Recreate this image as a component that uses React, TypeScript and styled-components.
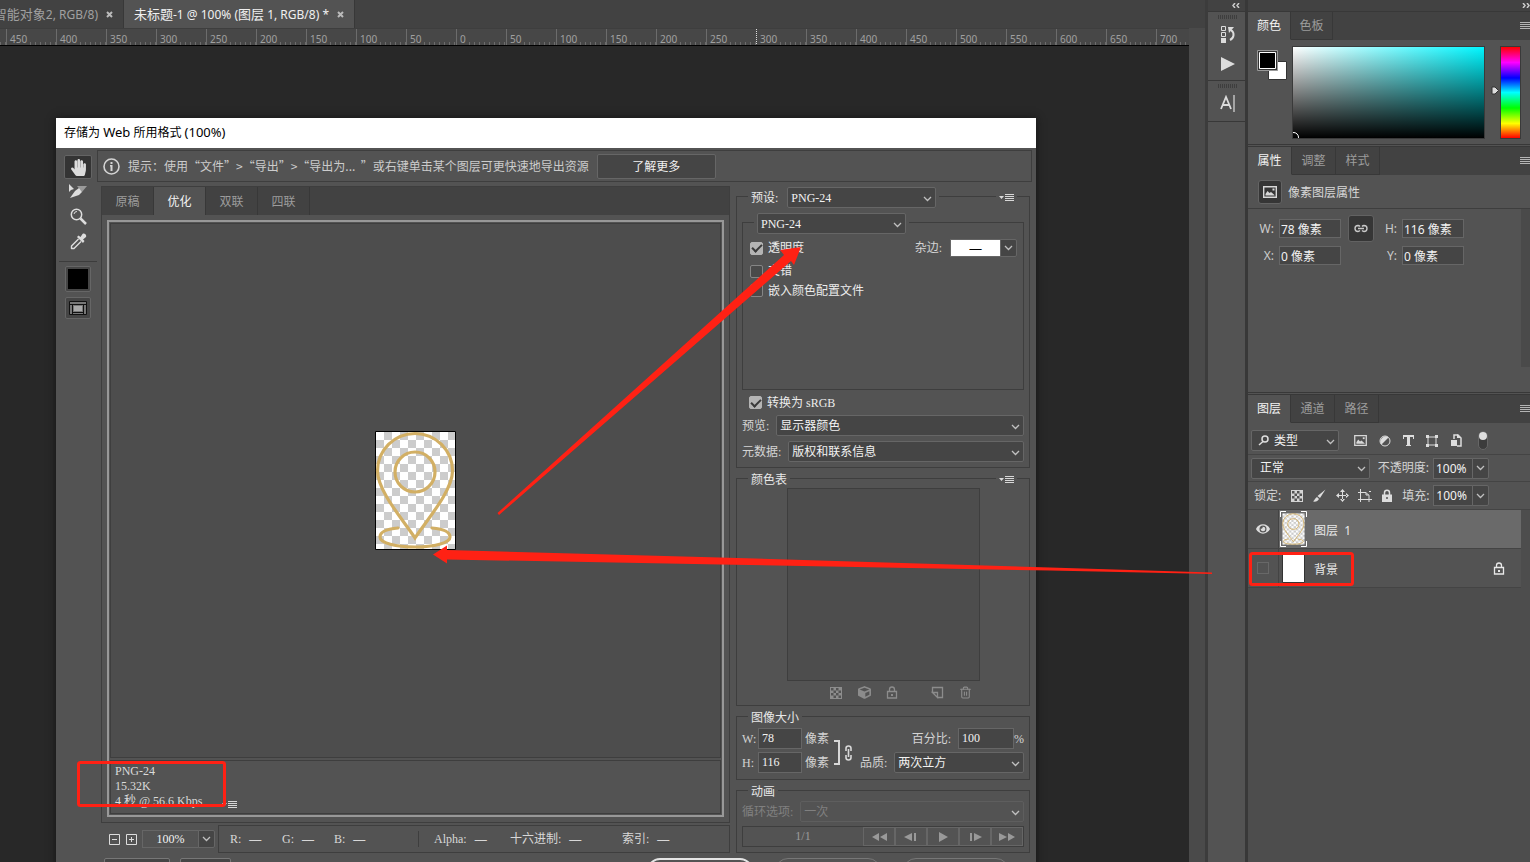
import React from 'react';
import styled, { createGlobalStyle, css } from 'styled-components';
import { FaHandPaper, FaEye, FaCube } from 'react-icons/fa';
import { Trash2 } from 'lucide-react';

const c = {
  bar: '#424242',
  panel: '#535353',
  line: '#3e3e3e',
  field: '#454545',
  fieldBorder: '#666666',
  text: '#e8e8e8',
  soft: '#cccccc',
  muted: '#9c9c9c',
  off: '#808080',
  red: '#ff2114',
};

const Global = createGlobalStyle`
  * { box-sizing: border-box; }
  body {
    margin: 0;
    background: #282828;
    color: ${c.text};
    font: 12px/16px "Noto Sans", "Noto Sans CJK SC", sans-serif;
    overflow: hidden;
  }
  button, input, select { font: inherit; color: inherit; margin: 0; }
  svg { display: block; }
`;

const Page = styled.div`
  position: relative;
  display: flex;
  height: 100vh;
  overflow: hidden;
`;

/* one step larger than the 12px text around it */
const Larger = styled.span`
  font-size: 13px;
`;

/* ---------- document window ---------- */
const DocumentArea = styled.main`
  flex: 1;
  min-width: 0;
  display: flex;
  flex-direction: column;
  background: #4a4a4a;
`;
const DocTabs = styled.nav`
  display: flex;
  height: 28px;
  flex: none;
  background: ${c.bar};
`;
const DocTab = styled.div<{ $active?: boolean }>`
  display: flex;
  align-items: center;
  justify-content: flex-end;
  gap: 8px;
  width: ${p => (p.$active ? 231 : 124)}px;
  padding: 1px 10px 0 0;
  overflow: hidden;
  white-space: nowrap;
  border-right: 1px solid #383838;
  color: ${p => (p.$active ? '#f0f0f0' : '#a0a0a0')};
  background: ${p => (p.$active ? c.panel : c.bar)};
`;
const CloseButton = styled.button`
  border: 0;
  padding: 0;
  background: none;
`;
const Ruler = styled.div`
  display: flex;
  height: 18px;
  flex: none;
  margin-right: 16px;
  overflow: hidden;
  background: #474747;
  border-top: 1px solid #3e3e3e;
  border-bottom: 1px solid #000;
`;
const RulerCell = styled.div<{ $cursor?: boolean }>`
  display: flex;
  flex: none;
  align-items: flex-end;
  gap: 3px;
  width: 50px;
  height: 17px;
  padding-left: 3px;
  border-left: 1px ${p => (p.$cursor ? 'dotted #ddd' : 'solid #6c6c6c')};
  color: #a0a0a0;
  font-size: 10px;
  line-height: 14px;
  &:first-child { width: 6px; padding: 0; border: 0; }
  &::after {
    content: '';
    flex: 1;
    height: 4px;
    background: repeating-linear-gradient(90deg, #6c6c6c 0 1px, transparent 1px 5px);
  }
`;
const Canvas = styled.div`
  flex: 1;
  min-height: 0;
  margin-right: 16px;
  padding: 72px 153px 0 56px;
  background: #282828;
  overflow: hidden;
`;

/* ---------- save dialog ---------- */
const Dialog = styled.section`
  background: ${c.panel};
  box-shadow: 0 0 8px #151515;
  font-family: "Liberation Serif", "Noto Sans CJK SC", serif;
`;
const TitleBar = styled.h1`
  margin: 0;
  height: 30px;
  padding: 0 8px;
  background: #fff;
  color: #000;
  font: 12px/29px "Noto Sans", "Noto Sans CJK SC", sans-serif;
`;
const DialogBody = styled.div`
  display: flex;
`;
const Toolbox = styled.div`
  display: flex;
  flex-direction: column;
  align-items: center;
  width: 41px;
  padding: 7px 0 0 3px;
`;
const ToolButton = styled.button<{ $active?: boolean }>`
  display: grid;
  place-items: center;
  width: 28px;
  height: ${p => (p.$active ? 24 : 25)}px;
  padding: 0;
  color: #dcdcdc;
  border-radius: 2px;
  border: 1px solid ${p => (p.$active ? '#646464' : 'transparent')};
  background: ${p => (p.$active ? '#343434' : 'none')};
`;
const ToolDivider = styled.hr`
  align-self: stretch;
  margin: 7px 0 4px;
  border: 0;
  border-top: 1px solid #3c3c3c;
`;
const SwatchButton = styled.button<{ $short?: boolean }>`
  display: grid;
  place-items: center;
  width: 26px;
  height: ${p => (p.$short ? 22 : 26)}px;
  margin-bottom: 5px;
  padding: 0;
  border: 1px solid #666;
  border-radius: 2px;
  background: ${c.field};
`;
const DialogMain = styled.div`
  flex: 1;
  min-width: 0;
  padding-top: 2px;
`;
const HintBar = styled.div`
  display: flex;
  align-items: center;
  gap: 8px;
  height: 32px;
  margin-right: 4px;
  padding-left: 5px;
  border: 1px solid ${c.line};
  color: ${c.soft};
  font-family: "Noto Sans CJK SC", sans-serif;
  white-space: nowrap;
`;
const LearnMore = styled.button`
  width: 119px;
  height: 25px;
  padding: 0;
  border: 1px solid #666;
  border-radius: 2px;
  background: ${c.field};
  color: #f0f0f0;
`;
const Columns = styled.div`
  display: flex;
  gap: 6px;
  margin: 4px 6px 0 4px;
`;
const PreviewColumn = styled.div`
  flex: 1;
  min-width: 0;
  display: flex;
  flex-direction: column;
`;
const PreviewPane = styled.div`
  flex: 1;
  display: flex;
  flex-direction: column;
  border: 1px solid ${c.line};
`;
const ViewTabs = styled.div`
  display: flex;
  height: 28px;
  background: ${c.bar};
`;
const ViewTab = styled.button<{ $active?: boolean }>`
  width: 52px;
  padding: 1px 0 0;
  border: 0;
  border-right: 1px solid #383838;
  background: ${p => (p.$active ? c.panel : c.bar)};
  color: ${p => (p.$active ? '#f4f4f4' : c.muted)};
`;
const PreviewFrame = styled.div`
  flex: 1;
  display: flex;
  flex-direction: column;
  gap: 2px;
  margin: 5px;
  padding: 1px;
  border: 2px solid #989898;
`;
const Artboard = styled.div`
  flex: 1;
  display: grid;
  place-items: center;
  border: 1px solid ${c.line};
  background: #4d4d4d;
`;
const InfoPane = styled.div`
  display: flex;
  align-items: flex-end;
  gap: 20px;
  height: 54px;
  padding: 3px 4px 4px;
  border: 1px solid ${c.line};
  color: #dadada;
  line-height: 15px;
`;
const StatusRow = styled.div`
  display: flex;
  align-items: center;
  height: 28px;
  margin-top: 2px;
  padding-left: 8px;
`;
const IconButton = styled.button<{ $gap?: number }>`
  display: grid;
  place-items: center;
  flex: none;
  border: 0;
  padding: 0;
  margin-right: ${p => p.$gap ?? 0}px;
  background: none;
  color: inherit;
`;
const Readouts = styled.div`
  flex: 1;
  display: flex;
  align-items: center;
  height: 28px;
  margin-left: 3px;
  padding-left: 11px;
  border: 1px solid ${c.line};
  color: #d8d8d8;
  white-space: nowrap;
`;
const Readout = styled.span<{ $w: number; $rule?: boolean }>`
  display: flex;
  gap: 8px;
  width: ${p => p.$w}px;
  ${p => p.$rule && css`border-right: 1px solid ${c.line}; margin-right: 15px;`}
`;

/* ---------- fields ---------- */
const SelectBox = styled.span<{ $w?: number; $off?: boolean }>`
  position: relative;
  display: flex;
  flex: ${p => (p.$w ? 'none' : 1)};
  width: ${p => (p.$w ? p.$w + 'px' : 'auto')};
  height: 21px;
  color: ${p => (p.$off ? c.off : '#f2f2f2')};
  select {
    appearance: none;
    flex: 1;
    min-width: 0;
    padding: 0 18px 0 3px;
    border: 1px solid ${p => (p.$off ? '#5e5e5e' : c.fieldBorder)};
    border-radius: 2px;
    background: ${p => (p.$off ? c.panel : c.field)};
  }
  svg {
    position: absolute;
    right: 4px;
    top: calc(50% - 2px);
    pointer-events: none;
  }
`;
const TextInput = styled.input<{ $w: number; $h?: number }>`
  width: ${p => p.$w}px;
  height: ${p => p.$h ?? 21}px;
  padding: 0 3px;
  border: 1px solid ${c.fieldBorder};
  background: ${c.field};
  color: #f2f2f2;
`;
const ZoomInput = styled(TextInput)`
  text-align: center;
  background: ${c.panel};
`;
const Drop = styled.button<{ $h?: number }>`
  display: grid;
  place-items: center;
  width: 17px;
  height: ${p => p.$h ?? 21}px;
  margin-left: -1px;
  padding: 0;
  border: 1px solid ${c.fieldBorder};
  border-radius: 0 2px 2px 0;
  background: ${c.field};
`;
const Group = styled.section<{ $inner?: boolean }>`
  margin-top: ${p => (p.$inner ? 14 : 10)}px;
  min-height: ${p => (p.$inner ? 168 : 0)}px;
  padding: 0 5px 5px;
  border: 1px solid ${c.line};
`;
const GroupHead = styled.div<{ $tall?: boolean }>`
  display: flex;
  align-items: center;
  justify-content: space-between;
  height: ${p => (p.$tall ? 21 : 17)}px;
  margin-top: ${p => (p.$tall ? -10 : -8)}px;
  padding: 0 7px 0 6px;
`;
const HeadPart = styled.div`
  display: flex;
  align-items: center;
  gap: 9px;
  padding: 0 3px;
  background: ${c.panel};
`;
const Settings = styled.aside`
  width: 294px;
  flex: none;
`;
const Row = styled.div<{ $h?: number; $top?: number }>`
  display: flex;
  align-items: center;
  justify-content: space-between;
  height: ${p => p.$h ?? 21}px;
  margin-top: ${p => p.$top ?? 0}px;
  color: #d4d4d4;
  white-space: nowrap;
  > label { flex: none; margin-right: 7px; }
`;
const Check = styled.label<{ $inner?: boolean }>`
  display: flex;
  align-items: center;
  gap: 5px;
  padding-left: ${p => (p.$inner ? 2 : 7)}px;
  color: #ececec;
  input {
    appearance: none;
    display: grid;
    place-items: center;
    width: 13px;
    height: 13px;
    border: 1px solid #858585;
    border-radius: 2px;
    background: #4a4a4a;
  }
  input:checked { background: #b4b4b4; border-color: #b4b4b4; }
  input:checked::after {
    content: '';
    width: 8px;
    height: 4px;
    margin-top: -2px;
    border-left: 2px solid #3a3a3a;
    border-bottom: 2px solid #3a3a3a;
    transform: rotate(-45deg);
  }
`;
const Matte = styled.div`
  display: flex;
  align-items: center;
  margin-right: 1px;
  > span { margin-right: 8px; }
`;
const MatteColor = styled.button`
  width: 51px;
  height: 18px;
  padding: 0;
  border: 1px solid ${c.fieldBorder};
  background: #fff;
  color: #000;
  font-weight: bold;
  line-height: 12px;
`;
const ColorTable = styled.div`
  width: 193px;
  height: 193px;
  margin: 0 auto;
  border: 1px solid ${c.line};
  background: #4d4d4d;
`;
const TableTools = styled.div`
  display: flex;
  align-items: center;
  height: 19px;
  padding: 4px 0 0 88px;
  color: #8c8c8c;
`;
const SizeLayout = styled.div`
  display: flex;
  padding: 2px 0 1px;
`;
const SizeColumn = styled.div<{ $grow?: boolean }>`
  display: flex;
  flex-direction: column;
  gap: 3px;
  flex: ${p => (p.$grow ? 1 : 'none')};
`;
const SizeRow = styled(Row)<{ $end?: boolean }>`
  justify-content: ${p => (p.$end ? 'flex-end' : 'flex-start')};
`;
const UnitLabel = styled.span`
  display: flex;
  align-items: center;
  label { width: 16px; }
`;
const LinkBracket = styled.svg`
  flex: none;
  margin: 12px 6px 0 5px;
`;
const DimLabel = styled.label`
  color: ${c.off};
`;
const Player = styled.div`
  display: flex;
  align-items: stretch;
  height: 21px;
  margin-top: 4px;
  border: 1px solid ${c.line};
  color: ${c.muted};
  line-height: 18px;
  > span { flex: 1; text-align: center; }
`;
const PlayerButton = styled.button`
  display: grid;
  place-items: center;
  width: 32px;
  padding: 0;
  border: 1px solid #666;
  background: ${c.panel};
  color: #999;
`;
const Footer = styled.div`
  display: flex;
  align-items: flex-start;
  height: 30px;
  margin: 5px 27px 0 7px;
`;
const FooterButton = styled.button<{ $w: number; $round?: boolean; $main?: boolean }>`
  width: ${p => p.$w}px;
  height: 26px;
  margin-left: ${p => (p.$round ? 22 : 0)}px;
  margin-right: ${p => (p.$round ? 0 : 10)}px;
  border: ${p => (p.$main ? '2px solid #e4e4e4' : '1px solid #777')};
  border-radius: ${p => (p.$round ? 13 : 2)}px;
  background: ${p => (p.$round ? c.panel : c.field)};
`;
const Spacer = styled.span`
  flex: 1;
`;

/* ---------- right side ---------- */
const Dock = styled.aside`
  display: flex;
  flex-direction: column;
  width: 42px;
  flex: none;
  border-left: 3px solid #3c3c3c;
  border-right: 2px solid #383838;
  background: ${c.panel};
`;
const DockTop = styled.div<{ $edge?: boolean }>`
  display: flex;
  justify-content: flex-end;
  align-items: center;
  height: 12px;
  flex: none;
  padding-right: ${p => (p.$edge ? 0 : 5)}px;
  border-bottom: 1px solid #383838;
  background: ${c.bar};
  color: #ccc;
`;
const DockGroup = styled.div<{ $h: number }>`
  display: flex;
  flex-direction: column;
  align-items: center;
  height: ${p => p.$h}px;
  padding: 3px 0 0 2px;
  border-bottom: 1px solid #383838;
  color: #dcdcdc;
  &::before {
    content: '';
    width: 19px;
    height: 4px;
    background: repeating-linear-gradient(90deg, #3e3e3e 0 1px, transparent 1px 2px);
  }
`;
const DockButton = styled(IconButton)`
  margin: 0;
  width: 30px;
  height: 30px;
`;
const Panels = styled.aside`
  display: flex;
  flex-direction: column;
  width: 283px;
  flex: none;
  border-left: 1px solid #383838;
  background: ${c.panel};
`;
const Panel = styled.section<{ $h?: number }>`
  flex: ${p => (p.$h ? 'none' : 1)};
  height: ${p => (p.$h ? p.$h + 'px' : 'auto')};
  display: flex;
  flex-direction: column;
  border-bottom: ${p => (p.$h ? '3px double #383838' : 0)};
`;
const PanelTabs = styled.div`
  display: flex;
  align-items: stretch;
  height: 28px;
  flex: none;
  background: ${c.bar};
`;
const PanelTab = styled.button<{ $active?: boolean; $w?: number }>`
  width: ${p => p.$w ?? 44}px;
  padding: 0;
  border: 0;
  border-right: 1px solid #383838;
  border-bottom: 1px solid ${p => (p.$active ? c.panel : '#383838')};
  background: ${p => (p.$active ? c.panel : c.bar)};
  color: ${p => (p.$active ? '#f4f4f4' : c.muted)};
`;
const PanelMenu = styled(IconButton)`
  margin-left: auto;
  width: 10px;
  color: #b4b4b4;
`;
const ColorBody = styled.div`
  display: flex;
  padding: 6px 9px 0;
`;
const ColorPair = styled.svg`
  flex: none;
  margin: 4px 4px 0 0;
`;
const ColorField = styled.div`
  flex: 1;
  height: 93px;
  border: 1px solid #3a3a3a;
  background:
    linear-gradient(to bottom, transparent, #000),
    linear-gradient(to right, #fff, #00f6ff);
  overflow: hidden;
  display: flex;
  align-items: flex-end;
`;
const HueHandle = styled.svg`
  flex: none;
  margin: 40px 1px 0 6px;
`;
const HueStrip = styled.div`
  width: 21px;
  height: 93px;
  border: 1px solid #3a3a3a;
  background: linear-gradient(to bottom, #f00, #f0f 17%, #00f 34%, #0ff 50%, #0f0 67%, #ff0 84%, #f00);
`;
const PropTitle = styled.div`
  display: flex;
  align-items: center;
  gap: 6px;
  height: 34px;
  flex: none;
  padding-left: 10px;
  border-bottom: 1px solid ${c.line};
  color: #d8d8d8;
  line-height: 20px;
  > span:last-child { padding-top: 2px; }
`;
const PropIcon = styled.span`
  display: grid;
  place-items: center;
  width: 24px;
  height: 24px;
  border: 1px solid #646464;
  border-radius: 3px;
  background: #363636;
`;
const PropBody = styled.div`
  flex: 1;
  display: flex;
  padding-left: 8px;
  > span { width: 9px; height: 158px; margin-left: auto; background: #4a4a4a; }
`;
const PropGrid = styled.div`
  display: grid;
  grid-template-columns: 23px 69px 26px 28px 62px;
  grid-auto-rows: 27px;
  align-items: center;
  padding-top: 6px;
  color: ${c.soft};
  label { text-align: right; padding-right: 5px; }
  input { padding: 0 1px; }
`;
const LinkButton = styled.button`
  display: grid;
  place-items: center;
  width: 26px;
  height: 27px;
  padding: 0;
  border: 1px solid #626262;
  border-radius: 3px;
  background: #363636;
`;
const LayerBar = styled.div<{ $h: number; $top?: number }>`
  display: flex;
  align-items: center;
  height: ${p => p.$h}px;
  flex: none;
  padding: ${p => p.$top ?? 0}px 0 0 3px;
  border-bottom: 1px solid #444;
  color: #d4d4d4;
  white-space: nowrap;
`;
const TypeSelect = styled(SelectBox)`
  select { padding-left: 22px; }
  svg:first-child { left: 7px; right: auto; top: 5px; z-index: 1; }
`;
const BlendSelect = styled(SelectBox)`
  select { padding-left: 8px; }
`;
const FilterIcons = styled.div<{ $left: number }>`
  display: flex;
  align-items: center;
  gap: 8px;
  padding-left: ${p => p.$left}px;
`;
const BarLabel = styled.label<{ $w: number }>`
  width: ${p => p.$w}px;
  text-align: right;
  padding-right: 4px;
`;
const LevelInput = styled(TextInput)`
  padding: 0 1px 0 2px;
`;
const LayerList = styled.div`
  flex: 1;
  padding-right: 9px;
  background: #4d4d4d;
`;
const Layer = styled.div<{ $active?: boolean }>`
  display: flex;
  align-items: stretch;
  height: 39px;
  border-bottom: 1px solid #444;
  background: ${p => (p.$active ? '#6a6a6a' : c.panel)};
  > span { flex: 1; align-self: center; padding: 3px 0 0 7px; }
  > svg { align-self: center; flex: none; margin-left: 1px; }
`;
const EyeCell = styled.button`
  display: grid;
  place-items: center;
  width: 31px;
  padding: 0;
  border: 0;
  border-right: 1px solid #444;
  background: ${c.panel};
  color: #dcdcdc;
`;
const HiddenEye = styled.i`
  width: 12px;
  height: 12px;
  border: 1px solid #686868;
`;
const LayerLock = styled.div`
  display: grid;
  place-items: center;
  width: 44px;
`;
const Markup = styled.svg`
  position: absolute;
  left: 0;
  top: 0;
  pointer-events: none;
`;

/* ---------- icons ---------- */
const Chevron = () => (
  <svg width="9" height="6" viewBox="0 0 9 6" fill="none" stroke="#c0c0c0" strokeWidth="1.3"><path d="M1 1l3.500 3.500L8 1" /></svg>
);
const MenuGlyph = () => (
  <svg width="15" height="9" viewBox="0 0 15 9" fill="#d8d8d8"><path d="M0 3h5l-2.500 3zM6 1h9v1H6zM6 3h9v1H6zM6 5h9v1H6zM6 7h9v1H6z" /></svg>
);
const Burger = () => (
  <svg width="10" height="8" viewBox="0 0 10 8" fill="currentColor"><path d="M0 0h10v1H0zM0 2h10v1H0zM0 4h10v1H0zM0 6h10v1H0z" /></svg>
);
const Cross = () => (
  <svg width="7" height="7" viewBox="0 0 7 7" stroke="#bbb" strokeWidth="2"><path d="M1 1l5 5M6 1L1 6" /></svg>
);
const DoubleArrow = ({ right }: { right?: boolean }) => (
  <svg width="8" height="5" viewBox="0 0 8 5" fill="none" stroke="#ccc" strokeWidth="1.500">
    <path d={right ? 'M1 0l2 2.500L1 5M5 0l2 2.500L5 5' : 'M3 0L1 2.500L3 5M7 0L5 2.500L7 5'} />
  </svg>
);
const Checker = () => (
  <svg width="12" height="12" viewBox="0 0 12 12" fill="currentColor"><path d="M0 0h12v12H0zM1 1v2.500h2.500V1zM6 1v2.500h2.500V1zM3.500 3.500V6H6V3.500zM8.500 3.500V6H11V3.500zM1 6v2.500h2.500V6zM6 6v2.500h2.500V6zM3.500 8.500V11H6V8.500zM8.500 8.500V11H11V8.500z" fillRule="evenodd" /></svg>
);
const LockSolid = () => (
  <svg width="12" height="13" viewBox="0 0 12 13"><path d="M3.500 6V3.800a2.500 2.500 0 0 1 5 0V6" fill="none" stroke="#dcdcdc" strokeWidth="1.500" /><path d="M1 5.500h10V13H1z" fill="#dcdcdc" /><circle cx="6" cy="9" r="1" fill="#535353" /></svg>
);
const LockOutline = () => (
  <svg width="12" height="13" viewBox="0 0 12 13" fill="none" stroke="currentColor" strokeWidth="1.300"><path d="M3.500 5.500V3.500a2.500 2.500 0 0 1 5 0v2M1.500 5.500h9v6.500h-9z" /><path d="M5 8h2v2H5z" fill="currentColor" stroke="none" /></svg>
);
const PictureIcon = ({ w = 14 }: { w?: number }) => (
  <svg width={w} height={w - 2} viewBox="0 0 14 12"><path d="M.7.700h12.600v10.600H.7z" fill="none" stroke="#d8d8d8" strokeWidth="1.400" /><path d="M2.500 9.500V8l2-3 2 2 1.500-1 3.500 3v.5z" fill="#d8d8d8" /><path d="M9.500 2.500h2v2h-2z" fill="#d8d8d8" /></svg>
);
const ChainIcon = () => (
  <svg width="14" height="9" viewBox="0 0 14 9" fill="none" stroke="#c8c8c8" strokeWidth="1.400"><path d="M6 2.500A3 3 0 0 0 4 1.500a3 3 0 0 0 0 6 3 3 0 0 0 2-1M8 2.500a3 3 0 0 1 2-1 3 3 0 0 1 0 6 3 3 0 0 1-2-1M4 4.500h6" /></svg>
);
const PinArt = ({ w, h }: { w: number; h: number }) => (
  <svg width={w} height={h} viewBox="0 0 81 119" preserveAspectRatio="none">
    <defs>
      <pattern id="checks" width="16" height="16" patternUnits="userSpaceOnUse" x="1" y="1">
        <path fill="#fff" d="M0 0h16v16H0z" /><path fill="#ccc" d="M8 0h8v8H8zM0 8h8v8H0z" />
      </pattern>
    </defs>
    <path fill="url(#checks)" stroke="#000" d="M.5.500h80v118H.5z" />
    <g fill="none" stroke="#d2af64" strokeWidth="3.200">
      <path d="M40 107C29 90 2.500 60 2.500 40a37.500 37.500 0 0 1 75 0c0 20-26.500 50-37.500 67z" />
      <circle cx="40" cy="41" r="20" />
      <path d="M23 97C11 98 5 101 5 106c0 6 16 10 35 10s35-4 35-10c0-5-7-8-18-9" strokeLinecap="round" />
    </g>
  </svg>
);

const rulerMarks = ['', 450, 400, 350, 300, 250, 200, 150, 100, 50, 0, 50, 100, 150, 200, 250, 300, 350, 400, 450, 500, 550, 600, 650, 700];

const Select = ({ id, value, w, off, label }: { id?: string; value: string; w?: number; off?: boolean; label?: string }) => (
  <SelectBox $w={w} $off={off}>
    <select id={id} aria-label={label} defaultValue={value}><option>{value}</option></select>
    <Chevron />
  </SelectBox>
);

const SaveDialog = () => (
  <Dialog>
    <TitleBar>存储为 <Larger>Web</Larger> 所用格式 <Larger>(100%)</Larger></TitleBar>
    <DialogBody>
      <Toolbox>
        <ToolButton $active aria-label="抓手"><FaHandPaper size={17} /></ToolButton>
        <ToolButton aria-label="切片选择">
          <svg width="20" height="15" viewBox="0 0 20 15"><path d="M1 0v8l2-2 3-1z" fill="#ddd" /><path d="M9 2h10l-5 6z" fill="#9a9a9a" /><path d="M2 14l5-7 4-3 3 4-3 3z" fill="#ddd" /></svg>
        </ToolButton>
        <ToolButton aria-label="缩放">
          <svg width="17" height="17" viewBox="0 0 17 17" fill="none" stroke="#ddd"><circle cx="6.500" cy="6.500" r="5.200" strokeWidth="1.500" /><path d="M4 6a3 3 0 0 1 3-2.500" /><path d="M10.500 10.500L16 16" strokeWidth="2.500" /></svg>
        </ToolButton>
        <ToolButton aria-label="吸管">
          <svg width="17" height="17" viewBox="0 0 17 17">
            <path d="M8.500 6L1.500 13v2.500H4L11 8.500" fill="none" stroke="#ddd" strokeWidth="1.400" strokeLinejoin="round" />
            <path d="M7 4l1.500-1.500L10.500 4l2-3c1.800-1.500 4.500 1 3.500 3l-3 2.500L14.500 8 13 10z" fill="#ddd" />
          </svg>
        </ToolButton>
        <ToolDivider />
        <SwatchButton aria-label="吸管颜色"><svg width="20" height="20"><path d="M0 0h20v20H0z" /></svg></SwatchButton>
        <SwatchButton $short aria-label="切换切片可见性">
          <svg width="18" height="14" viewBox="0 0 18 14"><path d="M.5.500h17v13H.5z" fill="#777" stroke="#111" /><path d="M0 3.500h18M3.500 3v11M14.500 3v11M4 11.500h10" stroke="#111" /><path d="M5 5h8v5H5z" fill="#aaa" /></svg>
        </SwatchButton>
      </Toolbox>
      <DialogMain>
        <HintBar>
          <svg width="17" height="17" viewBox="0 0 17 17"><circle cx="8.500" cy="8.500" r="7.500" fill="none" stroke="#d4d4d4" strokeWidth="1.600" /><path d="M7.500 4h2v2h-2zM7 7h2.500v6h-2V8.500H7z" fill="#d4d4d4" /></svg>
          <span>提示：使用“文件”&gt;“导出”&gt;“导出为...&nbsp; ”或右键单击某个图层可更快速地导出资源</span>
          <LearnMore>了解更多</LearnMore>
        </HintBar>
        <Columns>
          <PreviewColumn>
            <PreviewPane>
              <ViewTabs>
                <ViewTab>原稿</ViewTab>
                <ViewTab $active>优化</ViewTab>
                <ViewTab>双联</ViewTab>
                <ViewTab>四联</ViewTab>
              </ViewTabs>
              <PreviewFrame>
                <Artboard><PinArt w={81} h={119} /></Artboard>
                <InfoPane>
                  <div>PNG-24<br />15.32K<br />4 秒 @ 56.6 Kbps</div>
                  <IconButton aria-label="下载速度"><MenuGlyph /></IconButton>
                </InfoPane>
              </PreviewFrame>
            </PreviewPane>
            <StatusRow>
              <IconButton $gap={6} aria-label="缩小"><svg width="11" height="11" stroke="#ddd" fill="none"><path d="M.5.500h10v10H.5zM3 5.500h5" /></svg></IconButton>
              <IconButton $gap={5} aria-label="放大"><svg width="11" height="11" stroke="#ddd" fill="none"><path d="M.5.500h10v10H.5zM3 5.500h5M5.500 3v5" /></svg></IconButton>
              <ZoomInput $w={57} $h={18} aria-label="缩放级别" defaultValue="100%" />
              <Drop $h={18} aria-label="缩放列表"><Chevron /></Drop>
              <Readouts>
                <Readout $w={52}>R: <b>—</b></Readout>
                <Readout $w={52}>G: <b>—</b></Readout>
                <Readout $w={85} $rule>B: <b>—</b></Readout>
                <Readout $w={76}>Alpha: <b>—</b></Readout>
                <Readout $w={112}>十六进制: <b>—</b></Readout>
                <Readout $w={60}>索引: <b>—</b></Readout>
              </Readouts>
            </StatusRow>
          </PreviewColumn>
          <Settings>
            <Group>
              <GroupHead $tall>
                <HeadPart><label htmlFor="preset">预设:</label><Select id="preset" value="PNG-24" w={149} /></HeadPart>
                <HeadPart><IconButton aria-label="优化菜单"><MenuGlyph /></IconButton></HeadPart>
              </GroupHead>
              <Group $inner>
                <GroupHead $tall>
                  <HeadPart><Select label="文件格式" value="PNG-24" w={149} /></HeadPart>
                </GroupHead>
                <Row $h={28}>
                  <Check $inner><input type="checkbox" defaultChecked />透明度</Check>
                  <Matte><span>杂边:</span><MatteColor aria-label="杂边颜色">—</MatteColor><Drop $h={18} aria-label="杂边列表"><Chevron /></Drop></Matte>
                </Row>
                <Row $h={18}><Check $inner><input type="checkbox" />交错</Check></Row>
                <Row><Check $inner><input type="checkbox" />嵌入颜色配置文件</Check></Row>
              </Group>
              <Row $top={2}><Check><input type="checkbox" defaultChecked />转换为 sRGB</Check></Row>
              <Row $top={2}><label htmlFor="view">预览:</label><Select id="view" value="显示器颜色" /></Row>
              <Row $top={5}><label htmlFor="meta">元数据:</label><Select id="meta" value="版权和联系信息" /></Row>
            </Group>
            <Group>
              <GroupHead>
                <HeadPart>颜色表</HeadPart>
                <HeadPart><IconButton aria-label="颜色表菜单"><MenuGlyph /></IconButton></HeadPart>
              </GroupHead>
              <ColorTable />
              <TableTools>
                <IconButton $gap={16} aria-label="透明"><Checker /></IconButton>
                <IconButton $gap={15} aria-label="Web 颜色"><FaCube size={13} /></IconButton>
                <IconButton $gap={33} aria-label="锁定颜色"><LockOutline /></IconButton>
                <IconButton $gap={15} aria-label="新建颜色"><svg width="13" height="13" fill="none" stroke="currentColor" strokeWidth="1.300"><path d="M1.500 6.500V1.500h10v10H6.500M1.500 6.500h5v5z" /></svg></IconButton>
                <IconButton aria-label="删除颜色"><Trash2 size={13} /></IconButton>
              </TableTools>
            </Group>
            <Group>
              <GroupHead><HeadPart>图像大小</HeadPart></GroupHead>
              <SizeLayout>
                <SizeColumn>
                  <Row><UnitLabel><label htmlFor="w">W:</label><TextInput id="w" $w={44} defaultValue="78" /></UnitLabel>&nbsp;像素</Row>
                  <Row><UnitLabel><label htmlFor="h">H:</label><TextInput id="h" $w={44} defaultValue="116" /></UnitLabel>&nbsp;像素</Row>
                </SizeColumn>
                <LinkBracket width="20" height="26" viewBox="0 0 20 26" fill="none" stroke="#d8d8d8">
                  <path d="M0 1h5v23H0" strokeWidth="2" />
                  <path d="M12 11V8.500a2.500 2.500 0 0 1 5 0V11M12 15v2.500a2.500 2.500 0 0 0 5 0V15M14.500 9v8" strokeWidth="1.600" />
                </LinkBracket>
                <SizeColumn $grow>
                  <SizeRow $end><label htmlFor="pct">百分比:</label><TextInput id="pct" $w={56} defaultValue="100" />%</SizeRow>
                  <SizeRow><label htmlFor="quality">品质:</label><Select id="quality" value="两次立方" /></SizeRow>
                </SizeColumn>
              </SizeLayout>
            </Group>
            <Group>
              <GroupHead><HeadPart>动画</HeadPart></GroupHead>
              <Row $top={1}><DimLabel htmlFor="loop">循环选项:</DimLabel><Select id="loop" value="一次" off /></Row>
              <Player>
                <span>1/1</span>
                {['M8 1v8L1 5zM16 1v8L9 5z', 'M9 1v8L1 5zM11 1h2v8h-2z', 'M4 0l9 5-9 5z', 'M3 1h2v8H3zM7 1v8l8-4z', 'M0 1v8l8-4zM9 1v8l7-4z'].map((d, i) => (
                  <PlayerButton key={i} aria-label={['首帧', '上一帧', '播放', '下一帧', '末帧'][i]}>
                    <svg width="16" height="10" fill="currentColor"><path d={d} /></svg>
                  </PlayerButton>
                ))}
              </Player>
            </Group>
          </Settings>
        </Columns>
        <Footer>
          <FooterButton $w={66} aria-label="预览" />
          <FooterButton $w={51} aria-label="浏览器" />
          <Spacer />
          <FooterButton $w={106} $round $main aria-label="存储" />
          <FooterButton $w={106} $round aria-label="取消" />
          <FooterButton $w={106} $round aria-label="完成" />
        </Footer>
      </DialogMain>
    </DialogBody>
  </Dialog>
);

const ColorPanel = () => (
  <Panel $h={135}>
    <PanelTabs>
      <PanelTab $active $w={43}>颜色</PanelTab>
      <PanelTab $w={42}>色板</PanelTab>
      <PanelMenu aria-label="面板菜单"><Burger /></PanelMenu>
    </PanelTabs>
    <ColorBody>
      <ColorPair width="31" height="31" viewBox="0 0 31 31">
        <path d="M11.500 11.500h18v18h-18z" fill="#fff" stroke="#333" />
        <path d="M.5.500h20v20H.5z" fill="#333" stroke="#999" />
        <path d="M2.500 2.500h16v16h-16z" fill="#000" stroke="#fff" />
      </ColorPair>
      <ColorField><svg width="7" height="7" fill="none" stroke="#fff"><path d="M0 1.500a5 5 0 0 1 5.500 5.500" /></svg></ColorField>
      <HueHandle width="8" height="9" viewBox="0 0 8 9"><path d="M1 1h3l3.500 3.500L4 8H1z" fill="#ddd" stroke="#333" /></HueHandle>
      <HueStrip />
    </ColorBody>
  </Panel>
);

const PropertyPanel = () => (
  <Panel $h={248}>
    <PanelTabs>
      <PanelTab $active>属性</PanelTab>
      <PanelTab>调整</PanelTab>
      <PanelTab>样式</PanelTab>
      <PanelMenu aria-label="面板菜单"><Burger /></PanelMenu>
    </PanelTabs>
    <PropTitle><PropIcon><PictureIcon /></PropIcon><span>像素图层属性</span></PropTitle>
    <PropBody>
      <PropGrid>
        <label htmlFor="pw">W:</label><TextInput id="pw" $w={62} $h={19} defaultValue="78 像素" />
        <LinkButton aria-label="链接宽高"><ChainIcon /></LinkButton>
        <label htmlFor="ph">H:</label><TextInput id="ph" $w={62} $h={19} defaultValue="116 像素" />
        <label htmlFor="px">X:</label><TextInput id="px" $w={62} $h={19} defaultValue="0 像素" />
        <span />
        <label htmlFor="py">Y:</label><TextInput id="py" $w={62} $h={19} defaultValue="0 像素" />
      </PropGrid>
      <span />
    </PropBody>
  </Panel>
);

const LayerPanel = () => (
  <Panel>
    <PanelTabs>
      <PanelTab $active $w={43}>图层</PanelTab>
      <PanelTab>通道</PanelTab>
      <PanelTab>路径</PanelTab>
      <PanelMenu aria-label="面板菜单"><Burger /></PanelMenu>
    </PanelTabs>
    <LayerBar $h={32} $top={4}>
      <TypeSelect $w={88}>
        <svg width="11" height="11" fill="none" stroke="#ddd" strokeWidth="1.500"><circle cx="7" cy="4" r="3" /><path d="M5 6.500L1 10" /></svg>
        <select aria-label="筛选类型"><option>类型</option></select>
        <Chevron />
      </TypeSelect>
      <FilterIcons $left={15}>
        <IconButton $gap={4} aria-label="像素图层"><PictureIcon w={13} /></IconButton>
        <IconButton $gap={4} aria-label="调整图层"><svg width="12" height="12"><circle cx="6" cy="6" r="5" fill="none" stroke="#ddd" /><path d="M2.500 9.500A5 5 0 0 1 9.500 2.500z" fill="#ddd" /></svg></IconButton>
        <IconButton $gap={4} aria-label="文字图层"><svg width="11" height="11" fill="#ddd"><rect width="11" height="2" /><rect width="1" height="4" /><rect x="10" width="1" height="4" /><rect x="4" width="3" height="11" /><rect x="3" y="10" width="5" height="1" /></svg></IconButton>
        <IconButton $gap={4} aria-label="形状图层"><svg width="12" height="12" fill="#ddd"><path d="M2 2h8v8H2z" fill="none" stroke="#ddd" /><path d="M0 0h3v3H0zM9 0h3v3H9zM0 9h3v3H0zM9 9h3v3H9z" /></svg></IconButton>
        <IconButton $gap={8} aria-label="智能对象"><svg width="12" height="13"><path d="M4 5V1h4l3 3v8H7" fill="none" stroke="#ddd" strokeWidth="1.500" /><path d="M1 6h6v6H1zM7 0v4h4z" fill="#ddd" /></svg></IconButton>
        <IconButton aria-label="筛选开关"><svg width="10" height="19"><rect x=".5" y=".5" width="9" height="18" rx="4.500" fill="#3c3c3c" stroke="#666" /><circle cx="5" cy="5" r="4" fill="#ddd" /></svg></IconButton>
      </FilterIcons>
    </LayerBar>
    <LayerBar $h={27}>
      <BlendSelect $w={119}><select aria-label="混合模式"><option>正常</option></select><Chevron /></BlendSelect>
      <BarLabel htmlFor="opacity" $w={63}>不透明度:</BarLabel>
      <LevelInput id="opacity" $w={40} defaultValue="100%" /><Drop aria-label="不透明度滑块"><Chevron /></Drop>
    </LayerBar>
    <LayerBar $h={28}>
      <span>&nbsp;锁定:</span>
      <FilterIcons $left={10}>
        <IconButton $gap={2} aria-label="锁定透明像素"><Checker /></IconButton>
        <IconButton $gap={2} aria-label="锁定图像像素"><svg width="13" height="13" fill="#ddd"><path d="M12.500.500L7 9 4.500 7zM4 8l2 2c-1 2-3 3-6 2.500C2 11 2 9 4 8z" /></svg></IconButton>
        <IconButton $gap={1} aria-label="锁定位置"><svg width="13" height="13" fill="#ddd"><path d="M6 2h1v9H6zM2 6h9v1H2zM4 3l2.500-3L9 3zM4 10l2.500 3L9 10zM3 4v5L0 6.500zM10 4v5l3-2.500z" /></svg></IconButton>
        <IconButton $gap={1} aria-label="锁定画板"><svg width="14" height="13" fill="none" stroke="#ddd"><path d="M2.500 0v13M0 3.500h8l3 3V13M0 10.500h14M13 2.500h-2M8 3.500V6h3" /></svg></IconButton>
        <IconButton aria-label="锁定全部"><LockSolid /></IconButton>
      </FilterIcons>
      <BarLabel htmlFor="fill" $w={40}>填充:</BarLabel>
      <LevelInput id="fill" $w={40} defaultValue="100%" /><Drop aria-label="填充滑块"><Chevron /></Drop>
    </LayerBar>
    <LayerList>
      <Layer $active>
        <EyeCell aria-label="隐藏图层"><FaEye size={14} /></EyeCell>
        <svg width="27" height="36" viewBox="0 0 27 36">
          <path d="M6 .500H.5V6M21 .500h5.500V6M6 35.500H.5V30M21 35.500h5.500V30" stroke="#fff" fill="none" />
          <svg x="2" y="2" width="23" height="32"><PinArt w={23} h={32} /></svg>
        </svg>
        <span>图层&nbsp; 1</span>
      </Layer>
      <Layer>
        <EyeCell aria-label="显示图层"><HiddenEye /></EyeCell>
        <svg width="27" height="30"><path d="M2.500.500h22v29h-22z" fill="#fff" stroke="#333" /></svg>
        <span>背景</span>
        <LayerLock><LockOutline /></LayerLock>
      </Layer>
    </LayerList>
  </Panel>
);

export default function App() {
  return (
    <Page>
      <Global />
      <DocumentArea>
        <DocTabs>
          <DocTab>
            <span><Larger>智能对象</Larger>2, RGB/8)</span>
            <CloseButton aria-label="关闭"><Cross /></CloseButton>
          </DocTab>
          <DocTab $active>
            <span><Larger>未标题</Larger>-1 @ 100% (<Larger>图层</Larger> 1, RGB/8) *</span>
            <CloseButton aria-label="关闭"><Cross /></CloseButton>
          </DocTab>
        </DocTabs>
        <Ruler>{rulerMarks.map((m, i) => <RulerCell key={i} $cursor={i === 16}>{m}</RulerCell>)}</Ruler>
        <Canvas><SaveDialog /></Canvas>
      </DocumentArea>
      <Dock>
        <DockTop><DoubleArrow /></DockTop>
        <DockGroup $h={69}>
          <DockButton aria-label="历史记录"><svg width="16" height="17" fill="none" stroke="#dcdcdc"><path d="M1.500.500h4v4h-4zM1.500 6.500h4v4h-4z" /><path d="M1 12h5v5H1z" fill="#dcdcdc" stroke="none" /><path d="M10 14c4-2 5-7 1-10" strokeWidth="2" /><path d="M8 1h6L9 7z" fill="#dcdcdc" stroke="none" /></svg></DockButton>
          <DockButton aria-label="动作"><svg width="14" height="14" fill="#dcdcdc"><path d="M0 0l14 7-14 7z" /></svg></DockButton>
        </DockGroup>
        <DockGroup $h={41}>
          <DockButton aria-label="字符"><svg width="15" height="17" fill="none" stroke="#dcdcdc" strokeWidth="1.800"><path d="M1 14L6 2l5 12M3 10h6" /><path d="M14 0v17" strokeWidth="1.200" /></svg></DockButton>
        </DockGroup>
      </Dock>
      <Panels>
        <DockTop $edge><DoubleArrow right /></DockTop>
        <ColorPanel />
        <PropertyPanel />
        <LayerPanel />
      </Panels>
      <Markup width="1530" height="862" fill={c.red} aria-hidden="true">
        <path d="M497.500 513L784 255l-4-5 21-3-7 18-3-4L499 515z" />
        <path d="M433 554.500l14-9v4.500l273 7.500 330 10 162 5v1.500l-162-3.500-330-6-273-5v4z" />
        <rect x="78.500" y="762.500" width="146" height="43" rx="2" fill="none" stroke={c.red} strokeWidth="3" />
        <rect x="1250.500" y="553.500" width="102" height="31" rx="2" fill="none" stroke={c.red} strokeWidth="3" />
      </Markup>
    </Page>
  );
}
